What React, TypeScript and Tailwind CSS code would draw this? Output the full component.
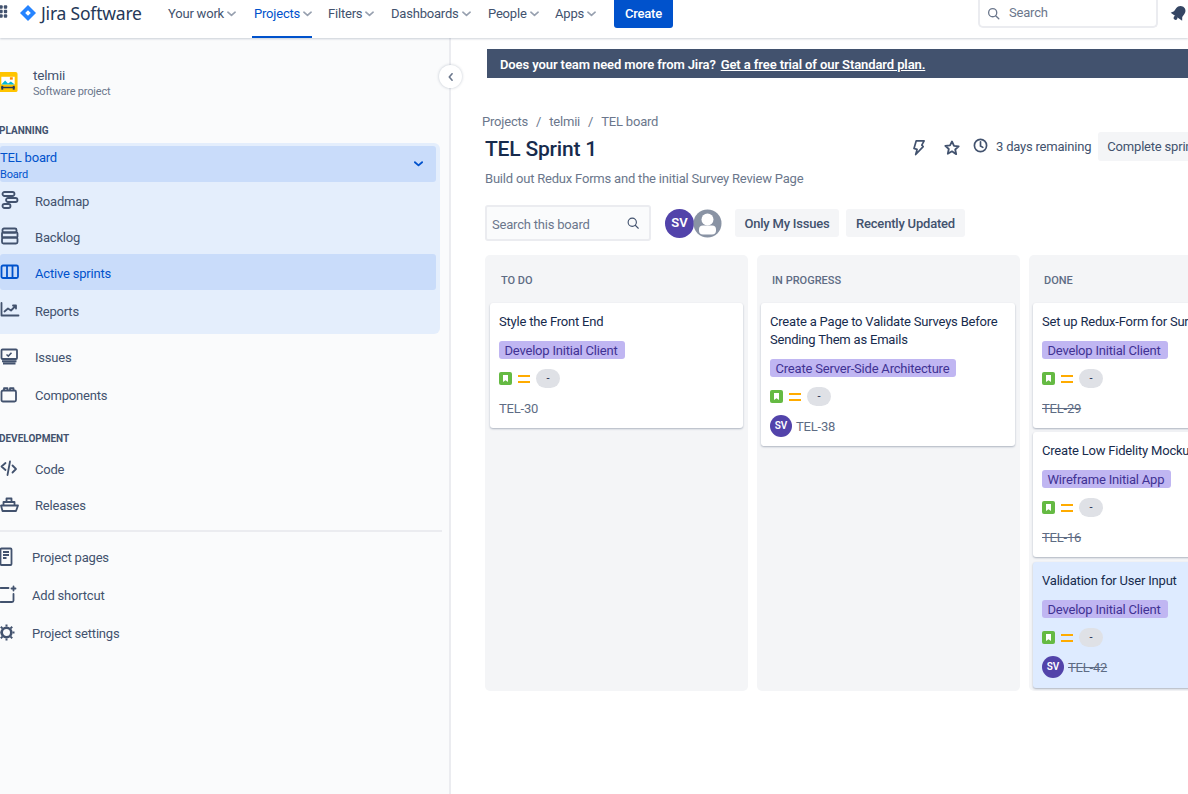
import React from "react";

const Chevron = () => (
  <svg viewBox="0 0 10 6" className="w-[9px] h-[6px] ml-[3px]" fill="none" stroke="#97a0af" strokeWidth="1.8" strokeLinecap="round" strokeLinejoin="round"><path d="M1 1l4 3.5L9 1" /></svg>
);

const NavItem = ({ label, w, active }: { label: string; w: string; active?: boolean }) => (
  <div className={`relative flex items-center h-[38px] pb-[10px] ${w} ${active ? "text-[#0052cc]" : "text-[#42526e]"}`}>
    <span>{label}</span>
    <Chevron />
    {active && <div className="absolute left-[-2px] right-[16px] bottom-0 h-[2px] bg-[#0052cc]" />}
  </div>
);

const Icon = {
  roadmap: (
    <svg viewBox="0 0 20 20" className="w-[20px] h-[20px]" fill="none" stroke="#42526e" strokeWidth="1.8"><rect x="2.5" y="2" width="12" height="4" rx="2" /><rect x="6" y="8" width="11.5" height="4" rx="2" /><rect x="2.5" y="14" width="8" height="4" rx="2" /></svg>
  ),
  backlog: (
    <svg viewBox="0 0 20 20" className="w-[20px] h-[20px]" fill="none" stroke="#42526e" strokeWidth="1.8"><rect x="2.5" y="2.5" width="14" height="4" rx="1.5" /><rect x="2" y="6.5" width="15.5" height="5" rx="1" /><rect x="2" y="11.5" width="15.5" height="6" rx="1.5" /></svg>
  ),
  board: (
    <svg viewBox="0 0 20 20" className="w-[20px] h-[20px]" fill="none" stroke="#0052cc" strokeWidth="1.8"><rect x="1.5" y="3.5" width="16.5" height="12.5" rx="1.5" /><path d="M7 3.5v12.5M12.5 3.5v12.5" /></svg>
  ),
  reports: (
    <svg viewBox="0 0 20 20" className="w-[20px] h-[20px]" fill="none" stroke="#42526e" strokeWidth="1.8" strokeLinecap="round" strokeLinejoin="round"><path d="M1.5 3v12.5h17" /><path d="M4.5 11.5l3.5-3 3 2 4.5-4.5M13 5.5h3v3" /></svg>
  ),
  issues: (
    <svg viewBox="0 0 20 20" className="w-[20px] h-[20px]" fill="none" stroke="#42526e" strokeWidth="1.8"><rect x="1.5" y="2.5" width="15.5" height="9.5" rx="1" /><path d="M6.5 7.5l1.8 1.6 3.2-3.4" strokeWidth="1.5" /><path d="M2 14.2h14.5M3 16.6h12.5" strokeWidth="2" /></svg>
  ),
  components: (
    <svg viewBox="0 0 20 20" className="w-[20px] h-[20px]" fill="none" stroke="#42526e" strokeWidth="1.8" strokeLinejoin="round"><rect x="1.5" y="5.5" width="14.5" height="11" rx="1.5" /><path d="M4 5.5V3.2h3.5v2.3M10 5.5V3.2h3.5v2.3" /></svg>
  ),
  code: (
    <svg viewBox="0 0 20 20" className="w-[20px] h-[20px]" fill="none" stroke="#42526e" strokeWidth="1.8" strokeLinecap="round" strokeLinejoin="round"><path d="M5.500 4L1.500 7.500l4 3.500M12.500 6.500l3.500 3.500-3.500 3.500M10 2.500L7.500 16" /></svg>
  ),
  releases: (
    <svg viewBox="0 0 20 20" className="w-[20px] h-[20px]" fill="none" stroke="#42526e" strokeWidth="1.8" strokeLinejoin="round"><path d="M1 10.500h17l-2 5.500H2.500z" /><path d="M3.500 10.500V7h11v3.500M6.500 7V3.500h5V7" /></svg>
  ),
  pages: (
    <svg viewBox="0 0 20 20" className="w-[20px] h-[20px]" fill="none" stroke="#42526e" strokeWidth="1.8"><rect x="0.5" y="1.5" width="11" height="16.5" rx="1" /><path d="M3 5h6M3 8h6M3 11h3.5" /></svg>
  ),
  shortcut: (
    <svg viewBox="0 0 20 20" className="w-[20px] h-[20px]" fill="none" stroke="#42526e" strokeWidth="1.8" strokeLinecap="round"><path d="M8.500 3H0.500M13.500 9v6.500a1.500 1.500 0 01-1.500 1.500H0.500" /><path d="M11.500 3.500h4M13.500 1.500v4" /></svg>
  ),
  settings: (
    <svg viewBox="0 0 20 20" className="w-[20px] h-[20px]" fill="none" stroke="#42526e" strokeWidth="2.6" strokeLinejoin="round"><circle cx="6.500" cy="9.500" r="4.800" /><path d="M6.500 1.500v2M6.500 15.500v2M0.800 3.800l1.600 1.600M10.600 13.600l1.600 1.600M12.200 3.800l-1.600 1.600M2.400 13.600l-1.600 1.600M-1.500 9.500h2M12.500 9.500h2" strokeWidth="2" /></svg>
  ),
};

const SideRow = ({ icon, label, h, gap, active, low }: { icon: React.ReactNode; label: string; h: string; gap: string; active?: boolean; low?: boolean }) => (
  <div className={`flex items-center ${h} rounded-[3px] ${active ? "bg-[#c9dcfa] text-[#0052cc]" : "text-[#42526e]"}`}>
    <div className={`shrink-0 flex items-center ${gap}`}>{icon}</div>
    <span className={low ? "pt-[4px]" : "pt-[2px]"}>{label}</span>
  </div>
);

const Story = () => (
  <svg viewBox="0 0 13 13" className="w-[13px] h-[13px] shrink-0"><rect width="13" height="13" rx="2" fill="#65ba43" /><path d="M4 3h5v7L6.500 8.200 4 10z" fill="#fff" /></svg>
);

const Meta = () => (
  <div className="flex items-center h-[19px]">
    <Story />
    <div className="ml-[6px] w-[12px] h-[8px] border-y-2 border-[#ffab00]" />
    <div className="ml-[6px] w-[24px] h-[19px] rounded-full bg-[#dfe1e6] text-center text-[11px] leading-[19px] text-[#172b4d]">-</div>
  </div>
);

const Sv = ({ size = "w-[22px] h-[22px] text-[10px]" }: { size?: string }) => (
  <div className={`rounded-full bg-[#5243aa] text-white font-semibold flex items-center justify-center shrink-0 tracking-normal ${size}`}>SV</div>
);

const Card = ({ title, epic, id, done, sv, blue, h, mb }: { title: React.ReactNode; epic: string; id: string; done?: boolean; sv?: boolean; blue?: boolean; h: string; mb?: string }) => (
  <div className={`${h} ${mb ?? ""} rounded-[3px] shadow-[0_1px_2px_rgba(9,30,66,0.3)] px-[9px] pt-[10px] ${blue ? "bg-[#deebff]" : "bg-white"}`}>
    <div className="leading-[18px] text-[#172b4d] whitespace-nowrap">{title}</div>
    <div className="mt-[10px] flex">
      <div className="h-[18px] pl-[5.500px] pr-[7px] rounded-[3px] bg-[#c0b6f2] text-[#403294] leading-[20px] whitespace-nowrap">{epic}</div>
    </div>
    <div className="mt-[10px]"><Meta /></div>
    <div className="flex items-center h-[22px] text-[#5e6c84] mt-[9px]">
      {sv && <span className="mr-[4px]"><Sv /></span>}
      <span className={`pt-[2px] ${done ? "line-through" : ""}`}>{id}</span>
    </div>
  </div>
);

export default function App() {
  return (
    <div className="w-[1188px] h-[794px] overflow-hidden bg-white text-[13px] tracking-[-0.2px] leading-[18px] text-[#172b4d] font-['Roboto','Noto_Sans',sans-serif] flex flex-col">
      {/* header */}
      <header className="h-[38px] shrink-0 flex items-start bg-white shadow-[0_1px_2px_rgba(9,30,66,0.2)] relative z-10">
        <div className="w-[8px] h-[38px] flex items-center pb-[14px] overflow-hidden shrink-0">
          <svg viewBox="0 0 14 14" className="w-[14px] h-[14px] ml-[-5px] shrink-0" fill="#42526e">
            {[2, 6.500, 11].map((y) => [1.500, 6, 10.500].map((x) => <rect key={`${x}${y}`} x={x - 1.700} y={y - 1.700} width="3.400" height="3.400" rx="0.900" />))}
          </svg>
        </div>
        <div className="ml-[12px] w-[148px] shrink-0 flex items-center h-[38px] pb-[13px]">
          <svg viewBox="0 0 16 16" className="w-[16px] h-[16px] shrink-0">
            <path d="M8 0l8 8-8 8-8-8z" fill="#2684ff" />
            <path d="M8 5.200L10.800 8 8 10.800 5.200 8z" fill="#fff" />
          </svg>
          <span className="ml-[5px] text-[17.500px] text-[#253858] font-['Noto_Sans',sans-serif] tracking-[-0.2px]">Jira Software</span>
        </div>
        <NavItem label="Your work" w="w-[86px]" />
        <NavItem label="Projects" w="w-[74px]" active />
        <NavItem label="Filters" w="w-[63px]" />
        <NavItem label="Dashboards" w="w-[97px]" />
        <NavItem label="People" w="w-[67px]" />
        <NavItem label="Apps" w="w-[59px]" />
        <div className="w-[59px] h-[28px] rounded-b-[3px] bg-[#0052cc] text-white font-medium flex items-center justify-center shrink-0">Create</div>
        <div className="ml-[305px] w-[180px] h-[28px] shrink-0 rounded-b-[5px] border-2 border-t-0 border-[#ebecf0] flex items-center pl-[7px] text-[#6b778c]">
          <svg viewBox="0 0 16 16" className="w-[13px] h-[13px]" fill="none" stroke="#6b778c" strokeWidth="1.600" strokeLinecap="round"><circle cx="7" cy="7" r="5" /><path d="M11 11l3.500 3.500" /></svg>
          <span className="ml-[9px]">Search</span>
        </div>
        <svg viewBox="0 0 18 18" className="ml-[12px] mt-[4px] w-[18px] h-[18px] shrink-0" fill="#344563">
          <g transform="rotate(35 9 9)">
            <path d="M9 1.500c-3 0-5 2.200-5 5v4l-2 3h14l-2-3v-4c0-2.800-2-5-5-5z" />
            <circle cx="9" cy="15" r="2" />
          </g>
        </svg>
      </header>

      <div className="flex flex-1 min-h-0">
        {/* sidebar */}
        <aside className="w-[451px] shrink-0 bg-[#fafbfc] border-r-2 border-[#ebecf0] pr-[9px] relative">
          <div className="ml-[-2px] mt-[34px] flex items-start h-[36px]">
            <svg viewBox="0 0 20 22" className="w-[20px] h-[21px] shrink-0">
              <rect width="20" height="21" rx="2" fill="#ffc400" />
              <rect x="3" y="5" width="14" height="8" fill="#fff" />
              <path d="M3 13l4-4 3 3 3-2 4 3z" fill="#00b8d9" />
              <rect x="12" y="5.500" width="3" height="2.500" fill="#ff8b00" />
              <rect x="3" y="14.500" width="2" height="4" fill="#253858" />
              <rect x="15" y="14.500" width="2" height="4" fill="#253858" />
              <rect x="3" y="15.500" width="14" height="1.500" fill="#253858" />
            </svg>
            <div className="ml-[15px]">
              <div className="text-[#42526e] text-[13.500px] leading-[18px] mt-[-6px]">telmii</div>
              <div className="text-[#6b778c] text-[11px] leading-[16px]">Software project</div>
            </div>
          </div>
          <div className="mt-[16px] text-[10px] font-bold text-[#42526e] leading-[14px] ml-[-1px] tracking-normal">PLANNING</div>
          <div className="mt-[5px] h-[191px] bg-[#e4eefc] rounded-r-[6px] pr-[4px] pt-[3px]">
            <div className="h-[36px] bg-[#c9dcfa] rounded-[3px] pt-[3px] text-[#0052cc] relative">
              <div className="leading-[18px]">TEL board</div>
              <div className="text-[11px] leading-[14px] mt-[1px]">Board</div>
              <svg viewBox="0 0 10 6" className="absolute right-[13px] top-[15px] w-[9px] h-[6px]" fill="none" stroke="#0052cc" strokeWidth="2" strokeLinecap="round" strokeLinejoin="round"><path d="M1 1l4 3.500L9 1" /></svg>
            </div>
            <SideRow icon={Icon.roadmap} label="Roadmap" h="h-[36px]" gap="w-[35px]" low />
            <SideRow icon={Icon.backlog} label="Backlog" h="h-[36px]" gap="w-[35px]" low />
            <SideRow icon={Icon.board} label="Active sprints" h="h-[36px]" gap="w-[35px]" active low />
            <SideRow icon={Icon.reports} label="Reports" h="h-[40px]" gap="w-[35px]" low />
          </div>
          <div className="mt-[4px]">
            <SideRow icon={Icon.issues} label="Issues" h="h-[38px]" gap="w-[35px]" />
            <SideRow icon={Icon.components} label="Components" h="h-[38px]" gap="w-[35px]" />
          </div>
          <div className="mt-[18px] text-[10px] font-bold text-[#42526e] leading-[14px] ml-[-1px] tracking-normal">DEVELOPMENT</div>
          <div className="mt-[5px]">
            <SideRow icon={Icon.code} label="Code" h="h-[36px]" gap="w-[35px]" />
            <SideRow icon={Icon.releases} label="Releases" h="h-[36px]" gap="w-[35px]" />
          </div>
          <div className="mt-[7px] h-[2px] bg-[#ebecf0] mr-[-2px]" />
          <div className="mt-[6px]">
            <SideRow icon={Icon.pages} label="Project pages" h="h-[38px]" gap="w-[32px]" />
            <SideRow icon={Icon.shortcut} label="Add shortcut" h="h-[38px]" gap="w-[32px]" />
            <SideRow icon={Icon.settings} label="Project settings" h="h-[38px]" gap="w-[32px]" />
          </div>
          <div className="absolute top-[27px] left-[439px] w-[23px] h-[23px] rounded-full bg-white shadow-[0_0_3px_rgba(9,30,66,0.25)] flex items-center justify-center z-10">
            <svg viewBox="0 0 6 10" className="w-[5px] h-[8px]" fill="none" stroke="#6b778c" strokeWidth="2" strokeLinecap="round" strokeLinejoin="round"><path d="M5 1L1.500 5 5 9" /></svg>
          </div>
        </aside>

        {/* main */}
        <main className="flex-1 min-w-0 pl-[34px]">
          <div className="mt-[11px] ml-[2px] h-[29px] w-[720px] bg-[#42526e] text-white font-semibold flex items-center pl-[13px] pt-[2px] whitespace-nowrap tracking-[-0.1px]">
            <span>Does your team need more from Jira?</span>
            <span className="ml-[5px] underline">Get a free trial of our Standard plan.</span>
          </div>
          <div className="mt-[35px] ml-[-3px] text-[#6b778c] flex leading-[18px]">
            <span>Projects</span><span className="mx-[8px]">/</span><span>telmii</span><span className="mx-[8px]">/</span><span>TEL board</span>
          </div>
          <div className="mt-[1px] flex items-start h-[29px] w-[720px]">
            <div className="w-[420px] shrink-0 text-[21px] leading-[35px] font-medium text-[#172b4d]">TEL Sprint 1</div>
            <div className="flex items-center h-[29px] whitespace-nowrap text-[#42526e]">
              <svg viewBox="0 0 16 18" className="w-[15px] h-[17px] ml-[6px] mt-[1px]" fill="none" stroke="#42526e" strokeWidth="1.800" strokeLinejoin="round"><path d="M5.500 2H14l-2.500 4.500L13 8l-8 8.500L6.500 11 3.200 10z" /></svg>
              <svg viewBox="0 0 16 16" className="w-[16px] h-[16px] ml-[18px] mt-[2px]" fill="none" stroke="#42526e" strokeWidth="1.800" strokeLinejoin="round"><path d="M8 1.500l2 4.300 4.700.5-3.500 3.200 1 4.700L8 11.300l-4.200 2.400 1-4.700-3.500-3.200 4.700-.5z" /></svg>
              <svg viewBox="0 0 16 16" className="w-[15px] h-[15px] ml-[13px] mt-[-2px]" fill="none" stroke="#42526e" strokeWidth="1.800" strokeLinecap="round"><circle cx="8" cy="8" r="6.500" /><path d="M8 4v4.500l2.500 1.500" /></svg>
              <span className="ml-[8px]">3 days remaining</span>
              <div className="ml-[7px] h-[29px] px-[9px] rounded-[3px] bg-[#f4f5f7] flex items-center">Complete sprint</div>
            </div>
          </div>
          <div className="mt-[9px] text-[#6b778c] leading-[18px]">Build out Redux Forms and the initial Survey Review Page</div>
          <div className="mt-[17px] flex items-center h-[36px]">
            <div className="w-[166px] h-[36px] rounded-[3px] border-2 border-[#ebecf0] bg-[#fafbfc] flex items-center justify-between pl-[5px] pr-[10px] text-[#6b778c]">
              <span className="pt-[3px]">Search this board</span>
              <svg viewBox="0 0 16 16" className="w-[12px] h-[12px]" fill="none" stroke="#42526e" strokeWidth="1.500" strokeLinecap="round"><circle cx="7" cy="7" r="5.500" /><path d="M11 11l4 4" /></svg>
            </div>
            <div className="ml-[14px] flex">
              <Sv size="w-[29px] h-[29px] text-[13px]" />
              <svg viewBox="0 0 29 29" className="w-[29px] h-[29px] ml-[-1px] shrink-0">
                <circle cx="14.500" cy="14.500" r="14" fill="#8993a4" />
                <circle cx="14.500" cy="10.500" r="6" fill="#fff" />
                <rect x="6" y="16.500" width="17" height="9" rx="4" fill="#fff" />
              </svg>
            </div>
            <div className="ml-[13px] h-[28px] w-[104px] rounded-[3px] bg-[#f4f5f7] flex items-center justify-center pt-[2px] font-medium text-[#42526e] whitespace-nowrap">Only My Issues</div>
            <div className="ml-[7px] h-[28px] w-[119px] rounded-[3px] bg-[#f4f5f7] flex items-center justify-center pt-[2px] font-medium text-[#42526e] whitespace-nowrap">Recently Updated</div>
          </div>
          <div className="mt-[14px] flex gap-[9px] w-[807px]">
            <section className="w-[263px] h-[436px] shrink-0 rounded-[5px] bg-[#f4f5f7] px-[5px]">
              <div className="h-[48px] pl-[11px] pt-[18px] text-[11px] leading-[16px] text-[#5e6c84] font-medium tracking-normal">TO DO</div>
              <Card title="Style the Front End" epic="Develop Initial Client" id="TEL-30" h="h-[125px]" />
            </section>
            <section className="w-[263px] h-[436px] shrink-0 rounded-[5px] bg-[#f4f5f7] pl-[4px] pr-[5px]">
              <div className="h-[48px] pl-[11px] pt-[18px] text-[11px] leading-[16px] text-[#5e6c84] font-medium tracking-normal">IN PROGRESS</div>
              <Card title={<>Create a Page to Validate Surveys Before<br />Sending Them as Emails</>} epic="Create Server-Side Architecture" id="TEL-38" sv h="h-[143px]" />
            </section>
            <section className="w-[263px] h-[436px] shrink-0 rounded-[5px] bg-[#f4f5f7] pl-[4px] pr-[5px]">
              <div className="h-[48px] pl-[11px] pt-[18px] text-[11px] leading-[16px] text-[#5e6c84] font-medium tracking-normal">DONE</div>
              <Card title="Set up Redux-Form for Survey Creation" epic="Develop Initial Client" id="TEL-29" done h="h-[125px]" mb="mb-[4px]" />
              <Card title="Create Low Fidelity Mockups" epic="Wireframe Initial App" id="TEL-16" done h="h-[125px]" mb="mb-[5px]" />
              <Card title="Validation for User Input" epic="Develop Initial Client" id="TEL-42" done sv blue h="h-[126px]" />
            </section>
          </div>
        </main>
      </div>
    </div>
  );
}
